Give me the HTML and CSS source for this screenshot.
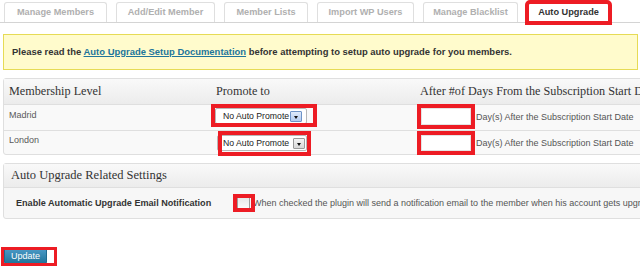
FILE: index.html
```html
<!DOCTYPE html>
<html>
<head>
<meta charset="utf-8">
<link rel="stylesheet" href="styles.css">
</head>
<body>
<div class="page">
  <div class="tabs">
    <span class="tab t1">Manage Members</span>
    <span class="tab t2">Add/Edit Member</span>
    <span class="tab t3">Member Lists</span>
    <span class="tab t4">Import WP Users</span>
    <span class="tab t5">Manage Blacklist</span>
    <span class="tab t6 active">Auto Upgrade</span>
  </div>

  <div class="notice">Please read the <a href="#">Auto Upgrade Setup Documentation</a> before attempting to setup auto upgrade for you members.</div>

  <div class="table">
    <div class="row head">
      <div class="c1">Membership Level</div>
      <div class="c2">Promote to</div>
      <div class="c3">After #of Days From the Subscription Start Date</div>
    </div>
    <div class="row r1">
      <div class="c1 label">Madrid</div>
      <div class="c2"><div class="select mark m-sel1"><span class="sel-text">No Auto Promote</span><span class="arrow blue"></span></div></div>
      <div class="c3"><span class="input"></span><span class="days">Day(s) After the Subscription Start Date</span></div>
    </div>
    <div class="row r2">
      <div class="c1 label">London</div>
      <div class="c2"><div class="select sel2 mark m-sel2"><span class="sel-text">No Auto Promote</span><span class="arrow"></span></div></div>
      <div class="c3"><span class="input"></span><span class="days">Day(s) After the Subscription Start Date</span></div>
    </div>
  </div>

  <div class="settings">
    <div class="set-head">Auto Upgrade Related Settings</div>
    <div class="set-row">
      <div class="set-label">Enable Automatic Upgrade Email Notification</div>
      <span class="checkbox mark m-chk"></span>
      <span class="set-desc">When checked the plugin will send a notification email to the member when his account gets upgraded.</span>
    </div>
  </div>

  <div class="update-wrap">
    <span class="button mark m-btn">Update</span>
  </div>
</div>
</body>
</html>
```

FILE: styles.css
```css
html, body {
  margin: 0;
  padding: 0;
  background: #fff;
  overflow: hidden;
}
body {
  width: 640px;
  height: 271px;
  font-family: "Liberation Sans", Arial, sans-serif;
  font-size: 9px;
  color: #333;
}
.page {
  width: 820px;
}

/* tabs */
.tabs {
  display: flex;
  align-items: flex-end;
  gap: 9px;
  padding: 2px 0 0 4px;
  border-bottom: 1px solid #d4d4d4;
}
.tab {
  box-sizing: border-box;
  height: 20px;
  line-height: 19px;
  text-align: center;
  border: 1px solid #dfdfdf;
  border-bottom: 0;
  border-radius: 3px 3px 0 0;
  font-weight: bold;
  font-size: 9.2px;
  color: #b0b0b0;
  background: #fff;
  white-space: nowrap;
}
.t1 { width: 103px; }
.t2 { width: 99px; }
.t3 { width: 84px; }
.t4 { width: 97px; }
.t5 { width: 95px; }
.t6 { width: 83px; }
.tab.active {
  height: 21px;
  margin-bottom: -1px;
  color: #333;
  border-color: #cfcfcf;
  outline: 4px solid #ed1c24;
  outline-offset: -2px;
}

/* notice */
.notice {
  box-sizing: border-box;
  width: 635px;
  height: 36px;
  margin: 11px 0 0 3px;
  padding: 0 8px;
  line-height: 34px;
  border: 1px solid #e6db55;
  background: #fffbcc;
  font-weight: bold;
  font-size: 9.45px;
  color: #333;
  white-space: nowrap;
}
.notice a {
  color: #21759b;
  text-decoration: underline;
}

/* table */
.table {
  width: 800px;
  margin: 8px 0 0 3px;
  border: 1px solid #dfdfdf;
  border-radius: 3px;
  background: #f9f9f9;
}
.row {
  display: grid;
  grid-template-columns: 206px 204px 1fr;
  align-items: start;
}
.row.head {
  height: 25px;
  border-bottom: 1px solid #dfdfdf;
  background: linear-gradient(#f9f9f9, #ececec);
  font-family: "Liberation Serif", "Times New Roman", serif;
  font-size: 12.2px;
  color: #333;
  line-height: 25px;
  align-items: center;
}
.row.head .c1 { padding-left: 5px; }
.row.head .c2 { padding-left: 6px; }
.row.head .c3 { padding-left: 6px; white-space: nowrap; }

.row.r1 {
  height: 25px;
  border-bottom: 1px solid #dfdfdf;
}
.row.r2 {
  height: 23px;
}
.label {
  padding-left: 5px;
  line-height: 11px;
  color: #5a5a5a;
  font-size: 9px;
}
.r1 .label { padding-top: 5px; }
.r2 .label { padding-top: 4px; }
.r1 .c2, .r1 .c3 { padding-top: 3px; }
.r2 .c2, .r2 .c3 { padding-top: 4px; }
.row .c2 { padding-left: 5px; }
.row .c3 { padding-left: 7px; display: flex; align-items: center; }
.row.head .c3 { display: block; }

.mark { position: relative; }
.mark::after {
  content: "";
  position: absolute;
  border: 4px solid #ed1c24;
}
.m-sel1::after { top: -5px; left: -5px; right: -11px; bottom: -4px; }
.m-sel2::after { top: -5px; left: 0px; right: -5px; bottom: -6px; }
.m-chk::after { top: -4px; left: -5px; right: -6px; bottom: -4px; }
.m-btn::after { top: -2px; left: -4px; right: -11px; bottom: -3px; border-width: 3px; }

.select {
  box-sizing: border-box;
  width: 92px;
  height: 16px;
  display: flex;
  align-items: center;
  justify-content: space-between;
  padding: 0 4px 0 7px;
  border: 1px solid #b8b8b8;
  border-radius: 2px;
  background: #fff;
  font-size: 8.7px;
  color: #222;
  white-space: nowrap;
}
.select.sel2 {
  width: 90px;
  margin-left: 2px;
  padding-left: 5px;
  padding-right: 1px;
}
.arrow {
  position: relative;
  flex: none;
  box-sizing: border-box;
  width: 12px;
  height: 11px;
  border: 1px solid #9a9a9a;
  border-radius: 1px;
  background: linear-gradient(#f4f4f4, #d8d8d8);
}
.arrow::before {
  content: "";
  position: absolute;
  left: 3px;
  top: 4px;
  border-left: 2.5px solid transparent;
  border-right: 2.5px solid transparent;
  border-top: 3px solid #111;
}
.arrow.blue {
  border-color: #6f94c8;
  background: linear-gradient(#dfeafa, #b3cbef);
}

.input {
  display: inline-block;
  box-sizing: border-box;
  width: 50px;
  height: 17px;
  background: #fff;
  border: 1px solid #e4e4e4;
  outline: 4px solid #ed1c24;
}
.r2 .input { height: 16px; }
.days {
  margin-left: 5px;
  font-size: 9px;
  color: #555;
  white-space: nowrap;
}

/* settings */
.settings {
  width: 800px;
  margin: 8px 0 0 3px;
  border: 1px solid #dfdfdf;
  border-radius: 3px;
  background: #f7f7f7;
}
.set-head {
  height: 23px;
  line-height: 23px;
  padding-left: 7px;
  border-bottom: 1px solid #dfdfdf;
  background: linear-gradient(#f9f9f9, #ececec);
  font-family: "Liberation Serif", "Times New Roman", serif;
  font-size: 12.5px;
  color: #333;
}
.set-row {
  height: 30px;
  display: flex;
  align-items: center;
}
.set-label {
  box-sizing: border-box;
  width: 233px;
  padding-left: 12px;
  font-weight: bold;
  font-size: 9.1px;
  color: #333;
  white-space: nowrap;
}
.checkbox {
  box-sizing: border-box;
  width: 13px;
  height: 12px;
  border: 1px solid #9c9c9c;
  border-radius: 1px;
  background: linear-gradient(#e8e8e8, #fafafa);
}
.set-desc {
  margin-left: 3px;
  font-size: 9px;
  color: #555;
  white-space: nowrap;
}

/* update */
.update-wrap {
  margin: 29px 0 0 4px;
  height: 16px;
}
.button {
  display: inline-block;
  box-sizing: border-box;
  width: 43px;
  height: 16px;
  line-height: 14px;
  text-align: center;
  border: 1px solid #1f6a8f;
  border-radius: 2px;
  background: linear-gradient(#4b9ac6, #21759b);
  color: #fff;
  font-size: 9px;
}
```
